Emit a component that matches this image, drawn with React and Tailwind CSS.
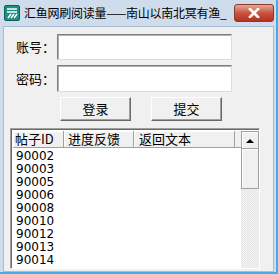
const rows = ['90002', '90003', '90005', '90006', '90008', '90010', '90012', '90013', '90014'];

const font = { fontFamily: '"SimSun", "Noto Sans CJK SC", "Liberation Sans", sans-serif' };

function Button({ children }) {
  return (
    <button className="w-[71px] h-[24px] bg-[#f0f0f0] border border-t-white border-l-white border-r-[#696969] border-b-[#696969] shadow-[inset_-1px_-1px_0_#a0a0a0] text-[13px] text-black flex items-center justify-center">
      {children}
    </button>
  );
}

export default function App() {
  return (
    <div className="w-[278px] h-[274px] bg-[#cfdcec] flex flex-col border-r-2 border-b-2 border-r-[#3fb0e6] border-b-[#3fb0e6] overflow-hidden" style={font}>
      {/* Title bar */}
      <div className="h-[26px] flex items-center pl-[4px] pr-[2px] shrink-0">
        <svg width="16" height="16" viewBox="0 0 16 16" className="shrink-0">
          <rect x="0.5" y="0.5" width="15" height="15" rx="1.5" fill="#1f8f84" stroke="#0d5f58" />
          <path d="M3 4h10M3 7h10" stroke="#fff" strokeWidth="1.6" />
          <path d="M4 13l3-4M7 13l3-4M10 13l3-4" stroke="#fff" strokeWidth="1.5" />
        </svg>
        <span className="ml-[4px] text-[12px] text-black whitespace-nowrap tracking-[-0.25px] overflow-hidden min-w-0">汇鱼网刷阅读量——南山以南北冥有渔_</span>
        <div className="ml-auto w-[40px] h-[18px] rounded-[3px] border border-[#8a3a2a] bg-gradient-to-b from-[#e8a898] via-[#c8553f] to-[#b4301c] flex items-center justify-center shrink-0">
          <svg width="12" height="10" viewBox="0 0 12 10">
            <path d="M2 1l8 8M10 1l-8 8" stroke="#fff" strokeWidth="2.6" strokeLinecap="square" />
          </svg>
        </div>
      </div>

      {/* Client area */}
      <div className="flex-1 mx-[3px] mr-[2px] bg-[#f0f0f0] flex flex-col pt-[7px] overflow-hidden border border-[#a8bcd4]">
        <div className="flex items-center h-[26px]">
          <span className="w-[53px] pl-[12px] text-[13px] text-black">账号：</span>
          <div className="w-[175px] h-[26px] bg-white border border-t-[#808080] border-l-[#808080] border-r-[#dcdcdc] border-b-[#dcdcdc] shadow-[inset_1px_1px_0_#b0b0b0]" />
        </div>
        <div className="flex items-center h-[27px] mt-[5px]">
          <span className="w-[53px] pl-[12px] text-[13px] text-black">密码：</span>
          <div className="w-[175px] h-[27px] bg-white border border-t-[#808080] border-l-[#808080] border-r-[#dcdcdc] border-b-[#dcdcdc] shadow-[inset_1px_1px_0_#b0b0b0]" />
        </div>
        <div className="flex mt-[5px] pl-[56px] gap-[20px]">
          <Button>登录</Button>
          <Button>提交</Button>
        </div>

        {/* List view */}
        <div className="mt-[7px] ml-[6px] w-[250px] flex-1 bg-white border border-t-[#a0a0a0] border-l-[#a0a0a0] border-r-white border-b-white shadow-[inset_1px_1px_0_#696969] flex overflow-hidden pl-[2px] pt-[2px]">
          <div className="flex-1 flex flex-col">
            <div className="flex h-[17px] text-[13px] text-black leading-[16px] shrink-0">
              <div className="w-[51px] pl-[2px] border-r border-b border-r-[#a0a0a0] border-b-[#a0a0a0] bg-[#f0f0f0] shadow-[inset_1px_1px_0_#fff]">帖子ID</div>
              <div className="w-[70px] pl-[4px] border-r border-b border-r-[#a0a0a0] border-b-[#a0a0a0] bg-[#f0f0f0] shadow-[inset_1px_1px_0_#fff]">进度反馈</div>
              <div className="w-[101px] pl-[5px] border-r border-b border-r-[#a0a0a0] border-b-[#a0a0a0] bg-[#f0f0f0] shadow-[inset_1px_1px_0_#fff]">返回文本</div>
              <div className="flex-1 border-b border-b-[#a0a0a0] bg-[#f0f0f0]" />
            </div>
            <div className="flex flex-col pl-[3px] pt-[2px]" style={{ fontFamily: '"Tahoma", "DejaVu Sans", sans-serif' }}>
              {rows.map((r) => (
                <div key={r} className="h-[13px] leading-[13px] text-[12px] text-black">{r}</div>
              ))}
            </div>
          </div>
          {/* Scrollbar */}
          <div className="w-[18px] flex flex-col bg-[repeating-conic-gradient(#f3f3f3_0%_25%,#e6e6e6_0%_50%)] bg-[length:2px_2px]">
            <div className="h-[18px] bg-[#f0f0f0] border border-[#a0a0a0] shadow-[inset_1px_1px_0_#fff] flex items-center justify-center">
              <svg width="8" height="5" viewBox="0 0 8 5"><path d="M0 5L4 1L8 5Z" fill="#000" /></svg>
            </div>
            <div className="h-[40px] bg-[#f0f0f0] border border-[#a0a0a0] border-t-0 shadow-[inset_1px_1px_0_#fff]" />
          </div>
        </div>
        <div className="h-[2px]" />
      </div>
    </div>
  );
}
